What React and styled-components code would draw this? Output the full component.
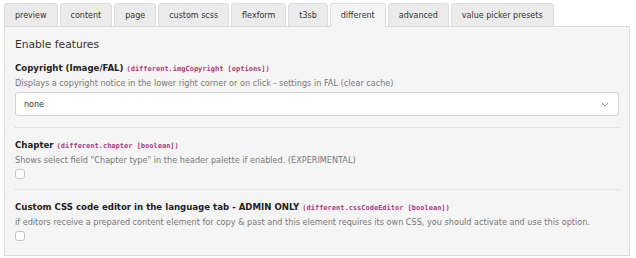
import React from "react";
import { createGlobalStyle, styled } from "styled-components";

const GlobalStyle = createGlobalStyle`
  body {
    margin: 0;
    background: #fff;
    font-family: "DejaVu Sans", Verdana, sans-serif;
    color: #333;
  }
`;

const tabs = [
  "preview",
  "content",
  "page",
  "custom scss",
  "flexform",
  "t3sb",
  "different",
  "advanced",
  "value picker presets",
];

const fields = [
  {
    label: "Copyright (Image/FAL)",
    code: "(different.imgCopyright [options])",
    desc: "Displays a copyright notice in the lower right corner or on click - settings in FAL (clear cache)",
    type: "select",
    value: "none",
  },
  {
    label: "Chapter",
    code: "(different.chapter [boolean])",
    desc: 'Shows select field "Chapter type" in the header palette if enabled. (EXPERIMENTAL)',
    type: "check",
  },
  {
    label: "Custom CSS code editor in the language tab - ADMIN ONLY",
    code: "(different.cssCodeEditor [boolean])",
    desc: "if editors receive a prepared content element for copy & past and this element requires its own CSS, you should activate and use this option.",
    type: "check",
  },
];

const App = () => {
  return (
    <Wrapper>
      <GlobalStyle />
      <TabBar>
        {tabs.map((tab) => (
          <Tab key={tab} $active={tab === "different"}>
            {tab}
          </Tab>
        ))}
      </TabBar>
      <Panel>
        <Heading>Enable features</Heading>
        {fields.map((field, i) => (
          <Field
            key={field.code}
            $last={i === fields.length - 1}
            $check={field.type === "check"}
          >
            <Label>
              {field.label} <Code>{field.code}</Code>
            </Label>
            <Desc>{field.desc}</Desc>
            {field.type === "select" ? (
              <Select>
                <span>{field.value}</span>
                <svg width="8" height="5" viewBox="0 0 8 5">
                  <path d="M1 1l3 3 3-3" fill="none" stroke="#999" strokeWidth="1" />
                </svg>
              </Select>
            ) : (
              <Check />
            )}
          </Field>
        ))}
      </Panel>
    </Wrapper>
  );
};

const Wrapper = styled.div`
  padding: 3px 6px 0 4px;
`;

const TabBar = styled.div`
  display: flex;
  gap: 2px;
  margin-bottom: -1px;
  position: relative;
  z-index: 1;
`;

const Tab = styled.div`
  height: 22px;
  padding: 0 10px;
  display: flex;
  align-items: center;
  font-size: 8px;
  color: #333;
  background: ${(p) => (p.$active ? "#f5f5f5" : "#ebebeb")};
  border: 1px solid #dcdcdc;
  border-bottom-color: ${(p) => (p.$active ? "#f5f5f5" : "#dcdcdc")};
  border-radius: 3px 3px 0 0;
`;

const Panel = styled.div`
  background: #f5f5f5;
  border: 1px solid #dcdcdc;
  padding: 11px 10px 14px 10px;
`;

const Heading = styled.div`
  font-size: 10.7px;
  line-height: 14px;
  color: #333;
  margin-bottom: 9px;
`;

const Field = styled.div`
  padding-bottom: ${(p) => (p.$last ? "0" : p.$check ? "10px" : "11px")};
  margin-bottom: ${(p) => (p.$last ? "0" : "10px")};
  border-bottom: ${(p) => (p.$last ? "none" : "1px dotted #d6d6d6")};
`;

const Label = styled.div`
  font-size: 8.6px;
  font-weight: bold;
  color: #222;
  line-height: 14px;
`;

const Code = styled.span`
  font-family: "DejaVu Sans Mono", monospace;
  font-size: 7px;
  font-weight: bold;
  color: #b0397e;
`;

const Desc = styled.div`
  font-size: 8.15px;
  color: #777;
  line-height: 14px;
  margin-bottom: 2px;
`;

const Select = styled.div`
  height: 22px;
  background: #fff;
  border: 1px solid #d4d4d4;
  border-radius: 3px;
  display: flex;
  align-items: center;
  justify-content: space-between;
  padding: 0 9px 0 8px;
  font-size: 8px;
  color: #333;
`;

const Check = styled.div`
  width: 8px;
  height: 8px;
  border: 1px solid #c4c4c4;
  border-radius: 3px;
  background: #fff;
`;

export default App;
